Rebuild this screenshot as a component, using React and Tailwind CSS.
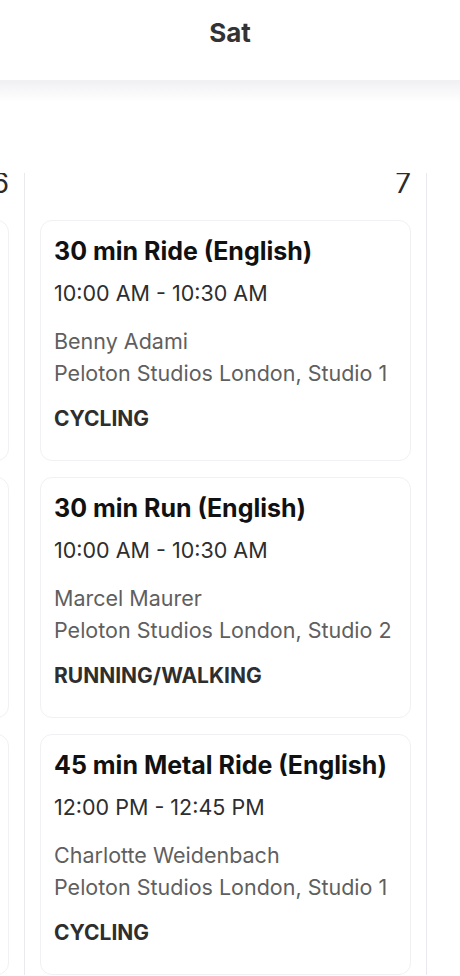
import React from "react";

const saturday = [
  {
    title: "30 min Ride (English)",
    time: "10:00 AM - 10:30 AM",
    instructor: "Benny Adami",
    location: "Peloton Studios London, Studio 1",
    discipline: "CYCLING",
  },
  {
    title: "30 min Run (English)",
    time: "10:00 AM - 10:30 AM",
    instructor: "Marcel Maurer",
    location: "Peloton Studios London, Studio 2",
    discipline: "RUNNING/WALKING",
  },
  {
    title: "45 min Metal Ride (English)",
    time: "12:00 PM - 12:45 PM",
    instructor: "Charlotte Weidenbach",
    location: "Peloton Studios London, Studio 1",
    discipline: "CYCLING",
  },
];

const friday = [
  {
    title: "20 min Ride (English)",
    time: "9:00 AM - 9:20 AM",
    instructor: "Hannah Frankson",
    location: "Peloton Studios London, Studio 1",
    discipline: "CYCLING",
  },
  {
    title: "30 min Run (English)",
    time: "10:00 AM - 10:30 AM",
    instructor: "Andy Speer",
    location: "Peloton Studios London, Studio 2",
    discipline: "RUNNING/WALKING",
  },
  {
    title: "30 min Yoga (English)",
    time: "11:00 AM - 11:30 AM",
    instructor: "Mariana Fernández",
    location: "Peloton Studios London, Studio 3",
    discipline: "YOGA",
  },
];

const ClassCard = ({ item }) => {
  return (
    <div className="rounded-[12px] border border-[#f1f1f3] bg-white px-[13px] pt-[14px] pb-[27px]">
      <div className="text-[25px] leading-[32px] font-bold text-[#111] whitespace-nowrap">{item.title}</div>
      <div className="mt-[12px] text-[21.5px] leading-[28px] text-[#2e2e2e] whitespace-nowrap">{item.time}</div>
      <div className="mt-[18px] text-[21.5px] leading-[32px] text-[#5f5f5f] whitespace-nowrap">{item.instructor}</div>
      <div className="text-[21.5px] leading-[32px] text-[#5f5f5f] whitespace-nowrap">{item.location}</div>
      <div className="mt-[16px] text-[21px] leading-[28px] font-bold text-[#2e2e2e] whitespace-nowrap">{item.discipline}</div>
    </div>
  );
};

const DayColumn = ({ day, classes }) => {
  return (
    <div className="w-[402px] shrink-0 border-r border-[#e9e9ef] px-[15px] overflow-hidden">
      <div className="text-right text-[28px] leading-[20px] text-[#2b2b2b]">{day}</div>
      <div className="mt-[27px] flex flex-col gap-[16px]">
        {classes.map((item, index) => (
          <ClassCard key={index} item={item} />
        ))}
      </div>
    </div>
  );
};

export default function App() {
  return (
    <div className="h-[976px] w-[460px] overflow-hidden bg-white" style={{ fontFamily: "Inter, 'Noto Sans', sans-serif" }}>
      <div className="flex h-[80px] justify-center bg-white pt-[16px]">
        <span className="text-[26px] leading-[34px] font-bold text-[#333]">Sat</span>
      </div>
      <div className="h-[22px] bg-gradient-to-b from-[#f0f0f3] to-white"></div>
      <div className="mt-[71px] flex -ml-[377px]">
        <DayColumn day="6" classes={friday} />
        <DayColumn day="7" classes={saturday} />
      </div>
    </div>
  );
}
